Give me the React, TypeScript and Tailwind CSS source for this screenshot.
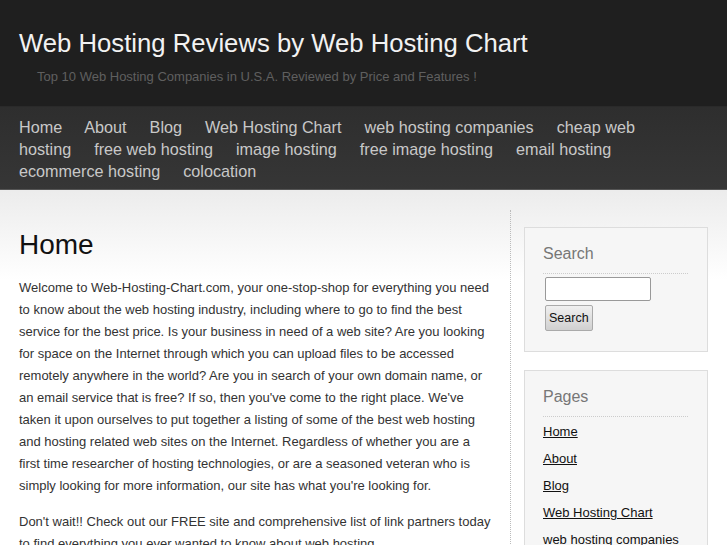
import React from 'react';

const navItems = [
  'Home',
  'About',
  'Blog',
  'Web Hosting Chart',
  'web hosting companies',
  'cheap web hosting',
  'free web hosting',
  'image hosting',
  'free image hosting',
  'email hosting',
  'ecommerce hosting',
  'colocation',
];

const pages = ['Home', 'About', 'Blog', 'Web Hosting Chart', 'web hosting companies'];

const App: React.FC = () => {
  return (
    <div className="min-h-screen bg-white font-['Liberation_Sans',Arial,sans-serif] overflow-hidden h-[545px]">
      {/* Header */}
      <div className="bg-[#1f1f1f] h-[106px] pt-[27px] px-[19px]">
        <h1 className="text-[#f2f2f2] text-[25.7px] leading-[32px]">Web Hosting Reviews by Web Hosting Chart</h1>
        <p className="text-[#5f5f5f] text-[13px] mt-[8px] ml-[18px]">
          Top 10 Web Hosting Companies in U.S.A. Reviewed by Price and Features !
        </p>
      </div>

      {/* Nav */}
      <div className="bg-gradient-to-b from-[#2e2e2e] to-[#363636] h-[84px] border-t border-[#2a2a2a] pt-[9px] pl-[19px] pr-[60px] border-b border-b-[#555]">
        <p className="text-[#c8c8c8] text-[16.2px] leading-[22px]">
          {navItems.map((item) => (
            <React.Fragment key={item}>
              <span className="mr-[18.5px]">{item}</span>{' '}
            </React.Fragment>
          ))}
        </p>
      </div>

      {/* Body */}
      <div className="bg-gradient-to-b from-[#ececec] via-white via-[90px] to-white flex">
        <div className="w-[510px] pl-[19px] pr-[16px] pt-[38px]">
          <h2 className="text-[#111] text-[28px] leading-[34px]">Home</h2>
          <p className="text-[#333] text-[13px] leading-[22px] mt-[15px]">
            Welcome to Web-Hosting-Chart.com, your one-stop-shop for everything you need to know about the web hosting
            industry, including where to go to find the best service for the best price. Is your business in need of a
            web site? Are you looking for space on the Internet through which you can upload files to be accessed
            remotely anywhere in the world? Are you in search of your own domain name, or an email service that is
            free? If so, then you've come to the right place. We've taken it upon ourselves to put together a listing
            of some of the best web hosting and hosting related web sites on the Internet. Regardless of whether you
            are a first time researcher of hosting technologies, or are a seasoned veteran who is simply looking for
            more information, our site has what you're looking for.
          </p>
          <p className="text-[#333] text-[13px] leading-[22px] mt-[14px]">
            Don't wait!! Check out our FREE site and comprehensive list of link partners today to find everything you
            ever wanted to know about web hosting.
          </p>
        </div>

        <div className="border-l border-dotted border-[#bbb] mt-[20px] pl-[13px] pt-[17px] flex flex-col gap-[18px]">
          {/* Search widget */}
          <div className="w-[184px] border border-[#ddd] bg-[#f6f6f6] px-[18px] pt-[16px] pb-[20px]">
            <h3 className="text-[#777] text-[16px] leading-[20px]">Search</h3>
            <div className="border-b border-dotted border-[#ccc] mt-[9px] w-[145px]" />
            <input
              type="text"
              className="mt-[3px] ml-[2px] block w-[106px] h-[24px] bg-white border border-[#999] rounded-[2px]"
            />
            <button className="mt-[4px] ml-[2px] block h-[26px] px-[3px] text-[12.5px] text-[#111] border border-[#aaa] rounded-[2px] bg-gradient-to-b from-[#f0f0f0] to-[#d0d0d0]">
              Search
            </button>
          </div>

          {/* Pages widget */}
          <div className="w-[184px] border border-[#ddd] bg-[#f6f6f6] px-[18px] pt-[16px] pb-[20px]">
            <h3 className="text-[#777] text-[16px] leading-[20px]">Pages</h3>
            <div className="border-b border-dotted border-[#ccc] mt-[9px] w-[145px]" />
            <ul className="mt-[1px] flex flex-col">
              {pages.map((p) => (
                <li key={p} className="text-[13px] leading-[27px] text-[#111] underline">
                  {p}
                </li>
              ))}
            </ul>
          </div>
        </div>
      </div>
    </div>
  );
};

export default App;
